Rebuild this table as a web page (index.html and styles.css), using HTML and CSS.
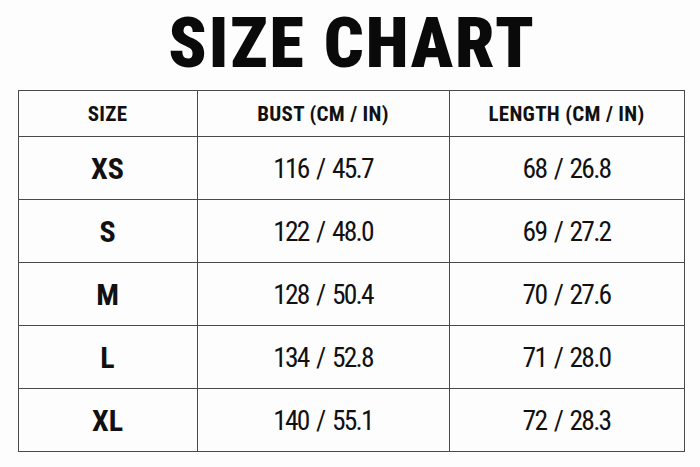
FILE: index.html
```html
<!DOCTYPE html>
<html lang="en">
<head>
<meta charset="utf-8">
<title>Size Chart</title>
<link rel="stylesheet" href="styles.css">
</head>
<body>
<main class="page">
  <h1 class="title">SIZE CHART</h1>
  <table class="chart">
    <colgroup>
      <col class="c-size">
      <col class="c-bust">
      <col class="c-length">
    </colgroup>
    <thead>
      <tr><th>SIZE</th><th>BUST (CM / IN)</th><th>LENGTH (CM / IN)</th></tr>
    </thead>
    <tbody>
      <tr><td class="size">XS</td><td>116 / 45.7</td><td>68 / 26.8</td></tr>
      <tr><td class="size">S</td><td>122 / 48.0</td><td>69 / 27.2</td></tr>
      <tr><td class="size">M</td><td>128 / 50.4</td><td>70 / 27.6</td></tr>
      <tr><td class="size">L</td><td>134 / 52.8</td><td>71 / 28.0</td></tr>
      <tr><td class="size">XL</td><td>140 / 55.1</td><td>72 / 28.3</td></tr>
    </tbody>
  </table>
</main>
</body>
</html>
```
FILE: styles.css
```css
html, body {
  margin: 0;
  padding: 0;
  background: #fdfdfd;
}
body {
  font-family: Roboto, "Liberation Sans", sans-serif;
  font-stretch: 75%;
  color: #111;
}
.page {
  width: 700px;
  height: 467px;
  display: flex;
  flex-direction: column;
  align-items: center;
}
.title {
  margin: 0 0 0 4px;
  height: 90px;
  font-size: 70px;
  line-height: 86px;
  font-weight: 900;
  font-stretch: 85%;
  letter-spacing: 1.9px;
  color: #0a0a0a;
}
.chart {
  width: 666px;
  border-collapse: collapse;
  table-layout: fixed;
  margin-left: 2px;
}
.c-size { width: 179px; }
.c-bust { width: 252px; }
.c-length { width: 235px; }
.chart th, .chart td {
  border: 1px solid #4a4a4a;
  text-align: center;
  padding: 0;
}
.chart th {
  height: 45px;
  font-size: 21px;
  font-weight: 700;
  letter-spacing: 0.3px;
}
.chart td {
  height: 62px;
  font-size: 27.5px;
  font-weight: 400;
  letter-spacing: -1.8px;
  word-spacing: 3px;
}
.chart td.size {
  font-size: 30px;
  font-weight: 700;
  letter-spacing: 0;
  word-spacing: 0;
}
```
